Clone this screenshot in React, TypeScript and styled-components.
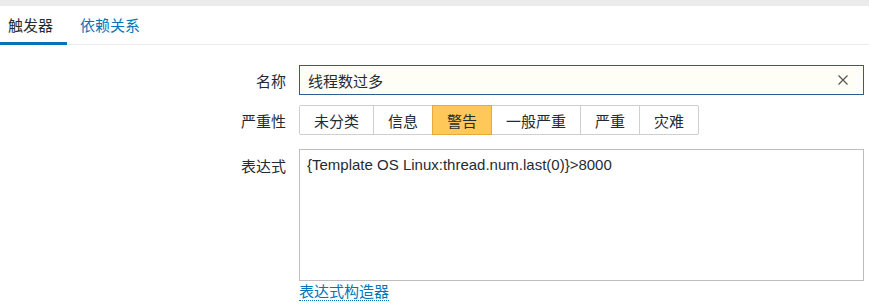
import { useState } from "react";
import styled, { createGlobalStyle } from "styled-components";

const GlobalStyle = createGlobalStyle`
  html, body {
    margin: 0;
    padding: 0;
    background: #ffffff;
  }
  body {
    font-family: Arial, "Liberation Sans", "Noto Sans CJK SC", sans-serif;
    font-size: 15px;
    color: #1f2c33;
  }
`;

const Page = styled.div`
  width: 869px;
  height: 305px;
  overflow: hidden;
  background: #ffffff;
`;

const TopBar = styled.div`
  height: 6px;
  background: #ebebeb;
`;

const TabList = styled.ul`
  display: flex;
  margin: 0;
  padding: 0;
  list-style: none;
  height: 38px;
  border-bottom: 1px solid #ebebeb;
`;

const Tab = styled.li<{ $active?: boolean }>`
  display: flex;
  align-items: center;
  padding: 0 14px 0 8px;
  margin-bottom: -1px;
  font-family: "Liberation Sans", "Noto Sans CJK SC", sans-serif;
  font-size: 15px;
  color: ${(p) => (p.$active ? "#1f2c33" : "#0275b8")};
  border-bottom: 3px solid ${(p) => (p.$active ? "#0275b8" : "transparent")};
  cursor: pointer;
  & + & {
    padding-left: 13px;
  }
`;

const Form = styled.div`
  display: grid;
  grid-template-columns: 286px 1fr;
  column-gap: 13px;
  padding: 20px 5px 0 0;
`;

const Label = styled.label<{ $top?: boolean }>`
  display: flex;
  justify-content: flex-end;
  align-items: ${(p) => (p.$top ? "flex-start" : "center")};
  padding-top: ${(p) => (p.$top ? "6px" : "0")};
  height: 30px;
  font-family: "Liberation Sans", "Noto Sans CJK SC", sans-serif;
  font-size: 15px;
  color: #1f2c33;
`;

const Field = styled.div<{ $gap?: number }>`
  margin-bottom: ${(p) => p.$gap ?? 10}px;
`;

const InputBox = styled.div`
  display: flex;
  align-items: center;
  height: 30px;
  box-sizing: border-box;
  border: 1px solid #2a5f8f;
  background: #fffef6;
`;

const TextInput = styled.input`
  flex: 1;
  border: none;
  outline: none;
  background: transparent;
  padding: 0 8px;
  height: 100%;
  font-family: "Liberation Sans", "Noto Sans CJK SC", sans-serif;
  font-size: 15px;
  color: #1f2c33;
`;

const ClearButton = styled.button`
  display: flex;
  align-items: center;
  justify-content: center;
  width: 28px;
  height: 28px;
  margin-right: 6px;
  padding: 0;
  border: none;
  background: transparent;
  color: #555;
  cursor: pointer;
`;

const Segments = styled.div`
  display: flex;
  height: 30px;
  margin-left: 1px;
`;

const Segment = styled.button<{ $selected?: boolean }>`
  box-sizing: border-box;
  height: 30px;
  padding: 0 14px;
  margin-left: -1px;
  font-family: "Liberation Sans", "Noto Sans CJK SC", sans-serif;
  font-size: 15px;
  color: #1f2c33;
  background: ${(p) => (p.$selected ? "#ffc859" : "#ffffff")};
  border: 1px solid ${(p) => (p.$selected ? "#e9a93a" : "#cfcfcf")};
  position: relative;
  z-index: ${(p) => (p.$selected ? 1 : 0)};
  cursor: pointer;
  &:first-child {
    border-radius: 2px 0 0 2px;
  }
  &:last-child {
    border-radius: 0 2px 2px 0;
  }
`;

const ExpressionArea = styled.textarea`
  display: block;
  box-sizing: border-box;
  width: 100%;
  height: 132px;
  resize: none;
  border: 1px solid #bdbdbd;
  outline: none;
  padding: 6px 7px;
  font-family: Arial, "Liberation Sans", "Noto Sans CJK SC", sans-serif;
  font-size: 15px;
  color: #1f2c33;
`;

const Link = styled.a`
  display: inline-block;
  margin-top: 2px;
  font-family: "Liberation Sans", "Noto Sans CJK SC", sans-serif;
  font-size: 15px;
  line-height: 17px;
  color: #0275b8;
  text-decoration: none;
  border-bottom: 1px dotted #0275b8;
  cursor: pointer;
`;

const severities = ["未分类", "信息", "警告", "一般严重", "严重", "灾难"];

const App = () => {
  const [name, setName] = useState("线程数过多");
  const [severity, setSeverity] = useState(2);
  const [expression, setExpression] = useState(
    "{Template OS Linux:thread.num.last(0)}>8000"
  );

  return (
    <Page>
      <GlobalStyle />
      <TopBar />
      <TabList>
        <Tab $active>触发器</Tab>
        <Tab>依赖关系</Tab>
      </TabList>
      <Form>
        <Label>名称</Label>
        <Field>
          <InputBox>
            <TextInput value={name} onChange={(e) => setName(e.target.value)} />
            <ClearButton onClick={() => setName("")}>
              <svg width="12" height="12" viewBox="0 0 12 12">
                <path
                  d="M1.5 1.5 L10.5 10.5 M10.5 1.5 L1.5 10.5"
                  stroke="currentColor"
                  strokeWidth="1.2"
                  fill="none"
                />
              </svg>
            </ClearButton>
          </InputBox>
        </Field>

        <Label>严重性</Label>
        <Field $gap={14}>
          <Segments>
            {severities.map((s, i) => (
              <Segment
                key={s}
                $selected={i === severity}
                onClick={() => setSeverity(i)}
              >
                {s}
              </Segment>
            ))}
          </Segments>
        </Field>

        <Label $top>表达式</Label>
        <Field $gap={0}>
          <ExpressionArea
            value={expression}
            onChange={(e) => setExpression(e.target.value)}
          />
          <Link>表达式构造器</Link>
        </Field>
      </Form>
    </Page>
  );
};

export default App;
